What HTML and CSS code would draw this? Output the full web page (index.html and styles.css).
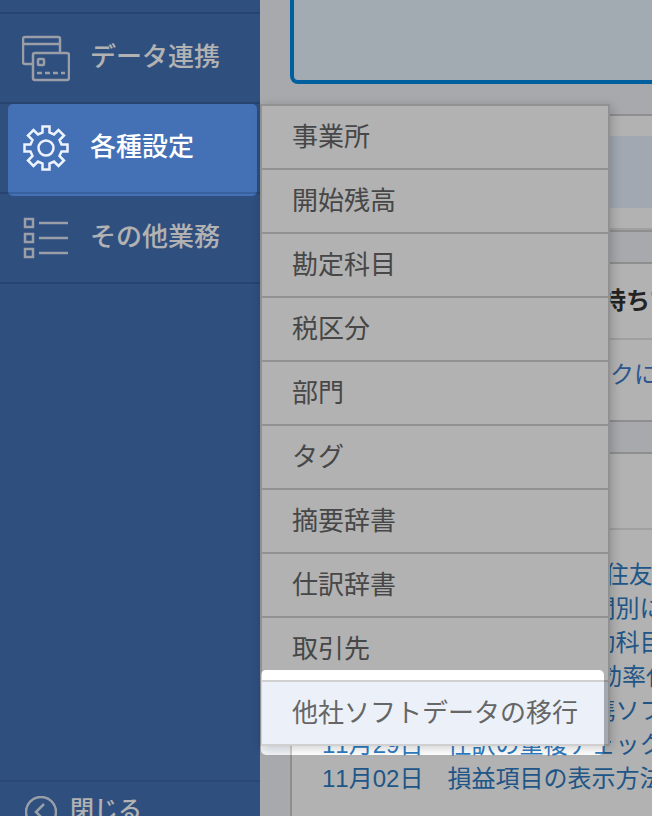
FILE: index.html
```html
<!DOCTYPE html>
<html lang="ja">
<head>
  <meta charset="UTF-8">
  <meta name="viewport" content="width=device-width, initial-scale=1">
  <title>各種設定</title>
  <link rel="stylesheet" href="styles.css">
</head>
<body>

<div class="app">
  <nav class="sidebar">
    <div class="sidebar-top"></div>
    <a class="nav-item" href="#">
      <svg class="nav-icon" viewBox="0 0 48 48">
        <path d="M10 30H3a2 2 0 0 1-2-2V5a2 2 0 0 1 2-2h33a2 2 0 0 1 2 2v13M1 10h37" />
        <rect x="11" y="19" width="36" height="27" rx="2" />
        <rect x="16" y="25" width="6" height="6" rx="1" />
        <path d="M15 39h28" stroke-dasharray="5 3" />
      </svg>
      <span>データ連携</span>
    </a>
    <a class="nav-item active" href="#">
      <svg class="nav-icon" viewBox="0 0 48 48">
        <path d="M20.500 2.500h7v6l4.500 2 4.500-4.500 5.500 5.500-4.500 4.500 2 4.500h6v7h-6l-2 4.500 4.500 4.500-5.500 5.500-4.500-4.500-4.500 2v6h-7v-6l-4.500-2-4.500 4.500-5.500-5.500 4.500-4.500-2-4.500h-6v-7h6l2-4.500-4.500-4.500 5.500-5.500 4.500 4.500 4.500-2z" />
        <circle cx="24" cy="24" r="7.500" />
      </svg>
      <span>各種設定</span>
    </a>
    <a class="nav-item" href="#">
      <svg class="nav-icon" viewBox="0 0 48 48">
        <path d="M3 5h8v8H3zM3 20h8v8H3zM3 35h8v8H3zM17 9h29M17 24h29M17 39h29" />
      </svg>
      <span>その他業務</span>
    </a>
    <button class="sidebar-close" type="button">
      <svg class="close-icon" viewBox="0 0 32 32">
        <circle cx="16" cy="16" r="15" />
        <path d="M19 8l-8 8 8 8" />
      </svg>
      <span>閉じる</span>
    </button>
  </nav>

  <main class="content">
    <section class="notice"></section>

    <section class="panel banner">
      <div class="banner-bar"></div>
    </section>

    <section class="panel guide">
      <h2>(法)会計ソフトのデータお持ちで</h2>
      <a href="#">弥生会計のデータ、クリックに</a>
    </section>

    <section class="panel news">
      <div class="news-head"></div>
      <ul>
        <li><a href="#">12月20日　平成3年度三井住友</a></li>
        <li><a href="#">12月18日　月次推移の期間別に</a></li>
        <li><a href="#">12月13日　勘定科目の補助科目</a></li>
        <li><a href="#">12月06日　仕訳 入力作業効率化</a></li>
        <li><a href="#">12月03日　銀行口座の連携ソフト</a></li>
        <li><a href="#">11月29日　仕訳の重複チェック</a></li>
        <li><a href="#">11月02日　損益項目の表示方法</a></li>
      </ul>
    </section>
  </main>

  <ul class="submenu">
    <li><a href="#">事業所</a></li>
    <li><a href="#">開始残高</a></li>
    <li><a href="#">勘定科目</a></li>
    <li><a href="#">税区分</a></li>
    <li><a href="#">部門</a></li>
    <li><a href="#">タグ</a></li>
    <li><a href="#">摘要辞書</a></li>
    <li><a href="#">仕訳辞書</a></li>
    <li><a href="#">取引先</a></li>
    <li><a class="current" href="#">他社ソフトデータの移行</a></li>
  </ul>

  <!-- dark layer with two spotlights -->
  <svg class="overlay" aria-hidden="true">
    <mask id="spots">
      <rect width="100%" height="100%" fill="#fff" />
      <rect x="8" y="104" width="249" height="92" rx="5" />
      <rect x="261" y="670" width="343" height="85" rx="5" />
    </mask>
    <rect width="100%" height="100%" fill-opacity="0.3" mask="url(#spots)" />
  </svg>
</div>

</body>
</html>
```
FILE: styles.css
```css
* {
  box-sizing: border-box;
}
body {
  margin: 0;
  font-family: "Liberation Sans", "Noto Sans CJK JP", sans-serif;
  font-kerning: none;
  background: #eff2f7;
}
a {
  text-decoration: none;
}
ul {
  list-style: none;
  margin: 0;
  padding: 0;
}
.app {
  position: relative;
  display: flex;
  height: 100vh;
  overflow: hidden;
}

/* sidebar */
.sidebar {
  display: flex;
  flex-direction: column;
  flex: none;
  width: 260px;
  background: #4471b6;
}
.sidebar-top {
  height: 14px;
  border-bottom: 2px solid #3861a0;
}
.nav-item {
  display: flex;
  align-items: center;
  gap: 20px;
  height: 90px;
  padding-left: 22px;
  border-bottom: 2px solid #3861a0;
  color: #fff;
  font-size: 26px;
  font-weight: 500;
}
.nav-item span {
  padding-bottom: 8px;
}
.nav-icon {
  width: 48px;
  height: 48px;
  fill: none;
  stroke: #dde4f0;
  stroke-width: 2.5;
}
.active .nav-icon {
  stroke: #edf3fd;
}
.sidebar-close {
  display: flex;
  align-items: flex-start;
  gap: 13px;
  height: 36px;
  margin-top: auto;
  padding: 14px 0 0 25px;
  border: 0;
  border-top: 2px solid #3d68aa;
  background: none;
  color: #fff;
  font: 500 24px/28px "Liberation Sans", "Noto Sans CJK JP", sans-serif;
  overflow: hidden;
}
.close-icon {
  flex: none;
  width: 32px;
  height: 32px;
  fill: none;
  stroke: #dde4f0;
  stroke-width: 2.5;
}

/* main column */
.content {
  flex: 1;
  min-width: 0;
  padding-left: 30px;
  font-size: 24px;
  white-space: nowrap;
}
.notice {
  height: 84px;
  margin-bottom: 30px;
  border: 4px solid #0089e4;
  border-width: 0 0 4px 4px;
  border-bottom-left-radius: 8px;
  background: #e9f4ff;
}
.panel {
  margin-bottom: 30px;
  border: 2px solid #ccc;
  border-right: 0;
  background: #fff;
}
.banner {
  padding: 20px 0;
}
.banner::after {
  content: "";
  display: block;
  height: 2px;
  margin: 20px 0 -20px;
  background: #e5e5e5;
}
.banner-bar {
  height: 72px;
  background: #e7f1ff;
}
.guide h2 {
  margin: 0;
  padding-left: 30px;
  border-bottom: 2px solid #e5e5e5;
  color: #333;
  font-size: 24px;
  line-height: 74px;
}
.guide a {
  display: block;
  padding: 0 0 10px 30px;
  color: #437bce;
  line-height: 70px;
}
.news-head {
  height: 76px;
  border-bottom: 2px solid #e5e5e5;
}
.news ul {
  padding: 28px 0 40px 30px;
}
.news li {
  height: 34px;
  line-height: 34px;
}
.news a {
  color: #2e7bc2;
}

/* flyout menu */
.submenu {
  position: absolute;
  top: 104px;
  left: 260px;
  width: 350px;
  border: 2px solid #d0d0d0;
  border-bottom: 0;
  background: #fff;
  box-shadow: 2px 2px 10px rgba(0,0,0,0.2);
}
.submenu a {
  display: block;
  height: 64px;
  padding-left: 30px;
  border-bottom: 2px solid #d0d0d0;
  color: #666;
  font-size: 26px;
  line-height: 62px;
}
.submenu .current {
  background: #ecf1f9;
}

.overlay {
  position: absolute;
  top: 0;
  left: 0;
  width: 100%;
  height: 100%;
  pointer-events: none;
}
```
